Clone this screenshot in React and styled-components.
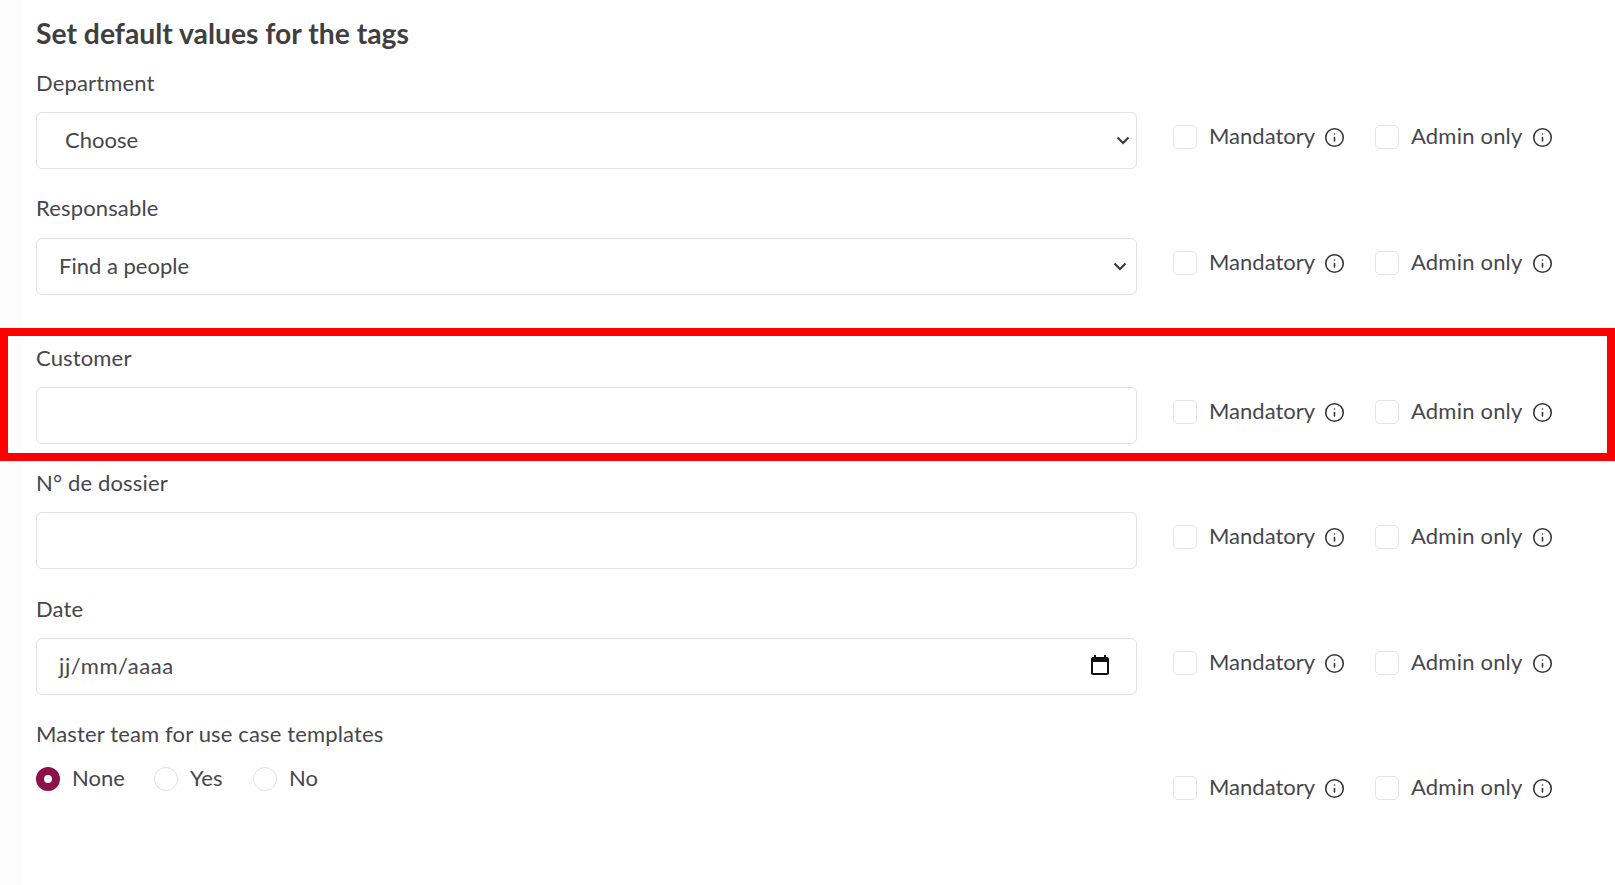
import React from 'react'
import styled, { createGlobalStyle } from 'styled-components'
import { Info } from 'lucide-react'

const GlobalStyle = createGlobalStyle`
  body {
    margin: 0;
    background: #fff;
    font-family: 'Lato', 'Noto Sans', sans-serif;
    color: #46464c;
  }
`

const Page = styled.div`
  height: 885px;
  overflow: hidden;
  background: #fff;
  box-shadow: inset 22px 0 0 #fdfdfd;
`

const Title = styled.h2`
  margin: 0;
  padding: 16px 0 0 36px;
  height: 55px;
  box-sizing: border-box;
  font-size: 28.3px;
  line-height: 34px;
  font-weight: 700;
  color: #3f3f42;
`

const Row = styled.div`
  display: grid;
  grid-template-columns: 1101px 1fr;
  column-gap: 36px;
  padding-left: ${(p) => (p.$boxed ? 28 : 36)}px;
  height: ${(p) => p.$height || 126}px;
`

const Highlight = styled.div`
  border: 8px solid #ff0000;
  height: 133px;
  box-sizing: border-box;
  margin-top: 21px;
`

const Label = styled.label`
  display: block;
  height: ${(p) => p.$height || 43}px;
  padding-top: ${(p) => p.$top || 0}px;
  font-size: 22px;
  line-height: 28px;
  letter-spacing: 0.15px;
`

const Field = styled.div`
  display: flex;
  align-items: center;
  justify-content: space-between;
  box-sizing: border-box;
  height: 57px;
  padding: 0 ${(p) => p.$right || 0}px 0 ${(p) => p.$left || 22}px;
  border: 1px solid #e0e0e6;
  border-radius: 6px;
  font-size: 22px;
`

const FieldText = styled.span`
  margin-bottom: 2px;
  letter-spacing: ${(p) => p.$spacing || 0}px;
`

const Options = styled.div`
  display: flex;
  align-items: center;
  height: 24px;
  margin-top: ${(p) => p.$top}px;
`

const Option = styled.div`
  display: flex;
  align-items: center;
  width: 202px;
  font-size: 22px;
  white-space: nowrap;
`

const OptionText = styled.span`
  margin-bottom: 3px;
  letter-spacing: ${(p) => p.$spacing || 0}px;
`

const Box = styled.span`
  flex: none;
  box-sizing: border-box;
  width: 24px;
  height: 24px;
  margin-right: 12px;
  border: 1px solid #e2e2e8;
  border-radius: 5px;
  background: #fff;
`

const InfoIcon = styled(Info)`
  flex: none;
  margin-left: 9px;
  color: #33333a;
`

const Radios = styled.div`
  display: flex;
  align-items: center;
  height: 24px;
  margin-top: 4px;
`

const Radio = styled.div`
  display: flex;
  align-items: center;
  width: ${(p) => p.$width}px;
  font-size: 22px;
`

const Dot = styled.span`
  flex: none;
  box-sizing: border-box;
  width: 24px;
  height: 24px;
  margin-right: 12px;
  border-radius: 50%;
  border: ${(p) => (p.$checked ? '8px solid #8c1049' : '1px solid #e0e0e6')};
  background: #fff;
`

const CalendarSvg = styled.svg`
  margin-bottom: 2px;
`

const Chevron = () => (
  <svg width="14" height="9" viewBox="0 0 14 9" fill="none" stroke="#3a3a40" strokeWidth="2.2">
    <path d="M1.5 1.5 7 7l5.5-5.5" />
  </svg>
)

const Calendar = () => (
  <CalendarSvg width="24" height="24" viewBox="0 0 24 24" fill="#111">
    <path d="M19 3h-1V1h-2v2H8V1H6v2H5c-1.11 0-1.99.9-1.99 2L3 19c0 1.1.89 2 2 2h14c1.1 0 2-.9 2-2V5c0-1.1-.9-2-2-2zm0 16H5V8h14v11z" />
  </CalendarSvg>
)

const Flags = ({ top }) => (
  <Options $top={top}>
    <Option>
      <Box />
      <OptionText>Mandatory</OptionText>
      <InfoIcon size={21} strokeWidth={1.8} />
    </Option>
    <Option>
      <Box />
      <OptionText $spacing={0.2}>Admin only</OptionText>
      <InfoIcon size={21} strokeWidth={1.8} />
    </Option>
  </Options>
)

const App = () => (
  <Page>
    <GlobalStyle />
    <Title>Set default values for the tags</Title>

    <Row>
      <div>
        <Label $top={14}>Department</Label>
        <Field $left={28} $right={6}>
          <FieldText>Choose</FieldText>
          <Chevron />
        </Field>
      </div>
      <Flags top={70} />
    </Row>

    <Row>
      <div>
        <Label $top={13} $height={44}>Responsable</Label>
        <Field $right={9}>
          <FieldText>Find a people</FieldText>
          <Chevron />
        </Field>
      </div>
      <Flags top={70} />
    </Row>

    <Highlight>
      <Row $boxed $height={117}>
        <div>
          <Label $top={8}>Customer</Label>
          <Field />
        </div>
        <Flags top={64} />
      </Row>
    </Highlight>

    <Row>
      <div>
        <Label $top={8}>N° de dossier</Label>
        <Field />
      </div>
      <Flags top={64} />
    </Row>

    <Row>
      <div>
        <Label $top={8}>Date</Label>
        <Field $right={24}>
          <FieldText $spacing={0.6}>jj/mm/aaaa</FieldText>
          <Calendar />
        </Field>
      </div>
      <Flags top={64} />
    </Row>

    <Row>
      <div>
        <Label $top={7}>Master team for use case templates</Label>
        <Radios>
          <Radio $width={118}>
            <Dot $checked />
            <OptionText>None</OptionText>
          </Radio>
          <Radio $width={99}>
            <Dot />
            <OptionText>Yes</OptionText>
          </Radio>
          <Radio $width={80}>
            <Dot />
            <OptionText>No</OptionText>
          </Radio>
        </Radios>
      </div>
      <Flags top={63} />
    </Row>
  </Page>
)

export default App
